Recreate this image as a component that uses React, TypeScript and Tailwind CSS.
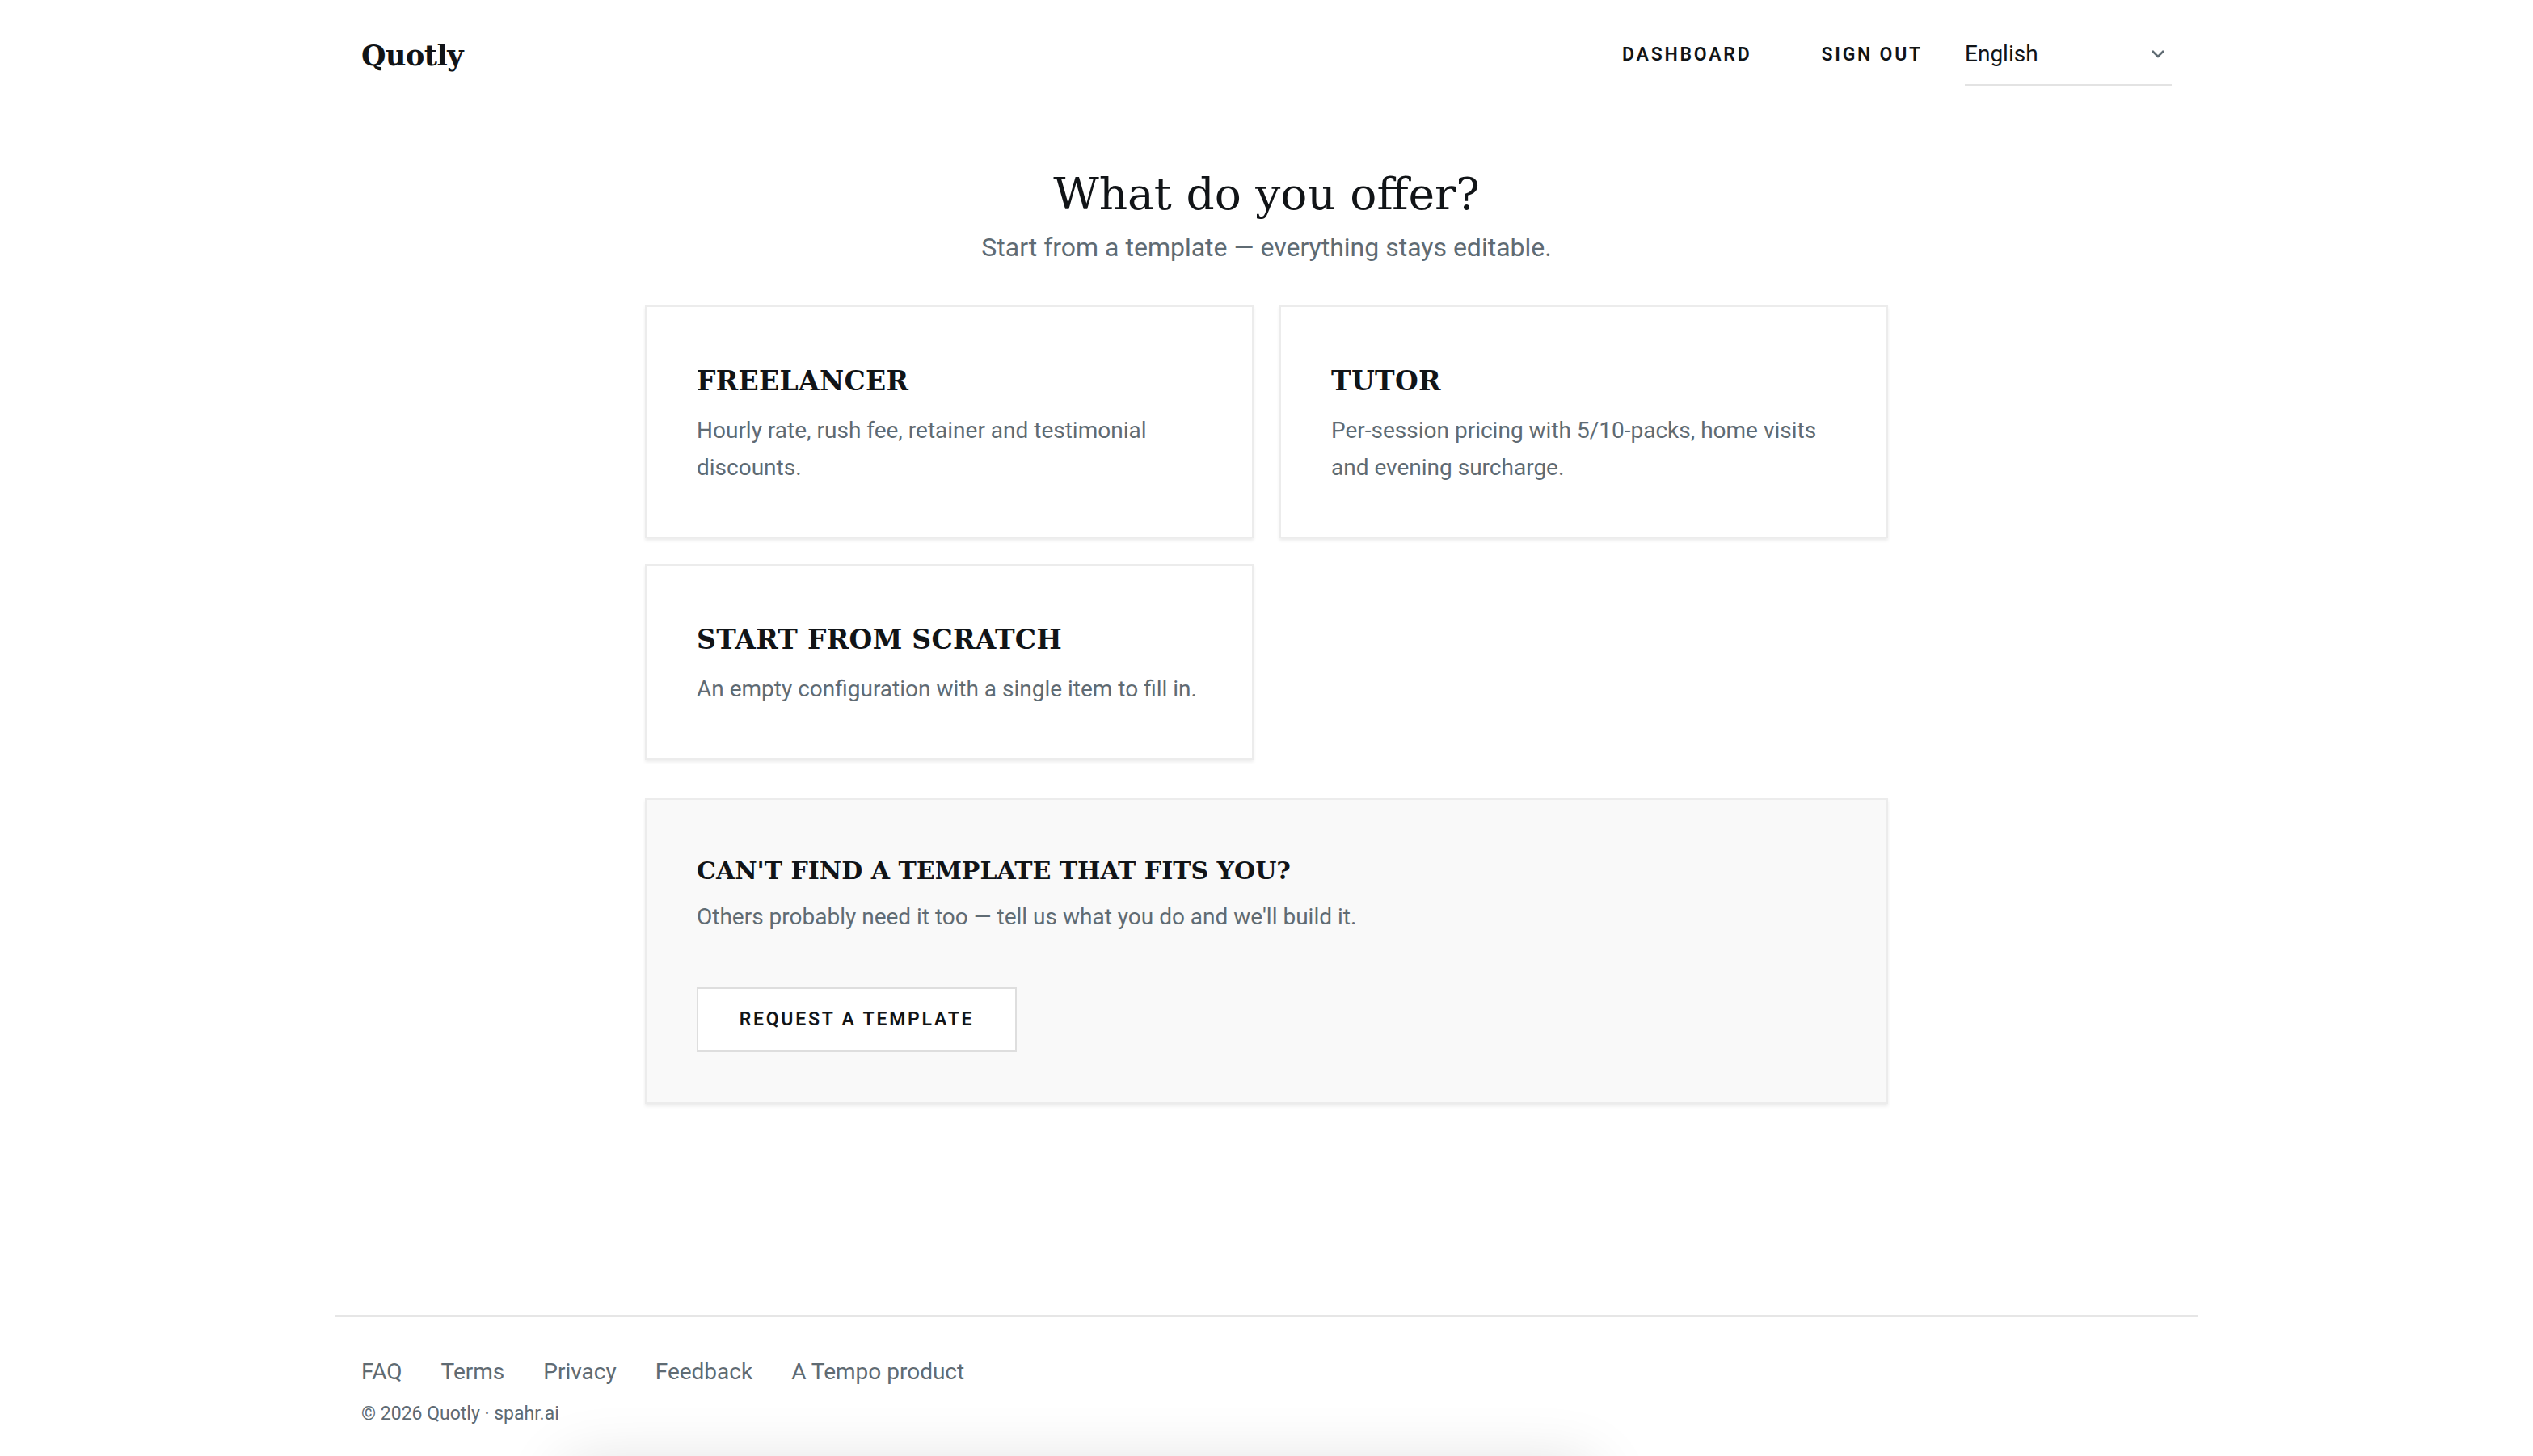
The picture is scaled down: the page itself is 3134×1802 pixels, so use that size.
const slab = "font-['DejaVu_Serif',serif]";

const templates = [
  {
    title: "FREELANCER",
    desc: "Hourly rate, rush fee, retainer and testimonial discounts.",
  },
  {
    title: "TUTOR",
    desc: "Per-session pricing with 5/10-packs, home visits and evening surcharge.",
  },
  {
    title: "START FROM SCRATCH",
    desc: "An empty configuration with a single item to fill in.",
  },
];

function Header() {
  return (
    <header className="flex items-center justify-between h-[136px] px-[32px]">
      <a href="#" className={`${slab} pt-[3px] text-[35px] font-bold text-[#111417] tracking-[-0.5px]`}>
        Quotly
      </a>
      <nav className="flex items-center">
        <a href="#" className="text-[23px] font-semibold tracking-[0.12em] text-[#111417]">
          DASHBOARD
        </a>
        <a href="#" className="ml-[86px] text-[23px] font-semibold tracking-[0.12em] text-[#111417]">
          SIGN OUT
        </a>
        <div className="ml-[52px] w-[256px] h-[76px] flex items-center justify-between border-b-2 border-[#e3e3e3]">
          <span className="text-[28px] text-[#111417]">English</span>
          <svg width="18" height="12" viewBox="0 0 18 12" className="mr-[8px]">
            <path d="M2 2 L9 9 L16 2" fill="none" stroke="#5f6b73" strokeWidth="2.6" />
          </svg>
        </div>
      </nav>
    </header>
  );
}

function TemplateCard({ title, desc }: { title: string; desc: string }) {
  return (
    <button className="text-left bg-white border-2 border-[#ececec] shadow-[0_3px_4px_rgba(0,0,0,0.08)] p-[62px] cursor-pointer">
      <h3 className={`${slab} text-[33px] leading-[60px] font-bold tracking-[0.01em] text-[#111417]`}>
        {title}
      </h3>
      <p className="mt-[8px] text-[28px] leading-[46px] text-[#5f6b73]">{desc}</p>
    </button>
  );
}

export default function App() {
  return (
    <div className="min-h-screen flex flex-col bg-white font-['Roboto',sans-serif] overflow-hidden">
      <div className="w-full max-w-[2304px] mx-auto flex-1 flex flex-col">
        <Header />
        <main className="flex-1 pt-[68px]">
          <div className="text-center">
            <h1 className={`${slab} text-[55px] leading-[72px] text-[#111417]`}>What do you offer?</h1>
            <p className="mt-[6px] text-[32px] leading-[48px] text-[#5f6b73]">
              Start from a template — everything stays editable.
            </p>
          </div>
          <div className="w-[1538px] mx-auto mt-[48px]">
            <div className="grid grid-cols-2 gap-[32px]">
              {templates.map((t) => (
                <TemplateCard key={t.title} title={t.title} desc={t.desc} />
              ))}
            </div>
            <section className="mt-[48px] bg-[#f9f9f9] border-2 border-[#ececec] shadow-[0_3px_4px_rgba(0,0,0,0.08)] px-[62px] pt-[62px] pb-[62px]">
              <h3 className={`${slab} text-[30px] leading-[52px] font-bold text-[#111417]`}>
                CAN'T FIND A TEMPLATE THAT FITS YOU?
              </h3>
              <p className="mt-[8px] text-[28px] leading-[46px] text-[#5f6b73]">
                Others probably need it too — tell us what you do and we'll build it.
              </p>
              <button className="mt-[64px] w-[396px] h-[80px] bg-white border-2 border-[#dedede] text-[23px] font-semibold tracking-[0.12em] text-[#111417]">
                REQUEST A TEMPLATE
              </button>
            </section>
          </div>
        </main>
        <footer className="border-t-2 border-[#e6e6e6] px-[32px] pt-[48px] pb-[34px]">
          <div className="flex gap-[48px] text-[28px] leading-[40px] text-[#5f6b73]">
            <a href="#">FAQ</a>
            <a href="#">Terms</a>
            <a href="#">Privacy</a>
            <a href="#">Feedback</a>
            <a href="#">A Tempo product</a>
          </div>
          <p className="mt-[14px] text-[23px] leading-[36px] text-[#5f6b73]">© 2026 Quotly · spahr.ai</p>
        </footer>
      </div>
      <div className="fixed left-[700px] w-[1270px] h-[100px] bottom-[-112px] bg-white shadow-[0_0_80px_rgba(0,0,0,0.14)]" />
    </div>
  );
}
